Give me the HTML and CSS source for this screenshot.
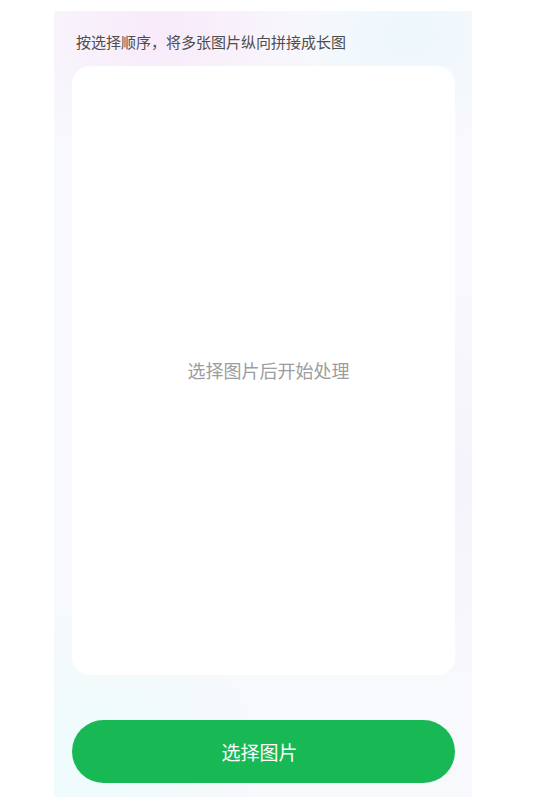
FILE: index.html
```html
<!DOCTYPE html>
<html lang="zh-CN">
<head>
<meta charset="utf-8">
<title>长图拼接</title>
<link rel="stylesheet" href="styles.css">
</head>
<body>
<main class="panel">
  <p class="hint">按选择顺序，将多张图片纵向拼接成长图</p>
  <section class="card">
    <span class="placeholder">选择图片后开始处理</span>
  </section>
  <button class="btn" type="button">选择图片</button>
</main>
</body>
</html>
```
FILE: styles.css
```css
html, body {
  margin: 0;
  padding: 0;
  background: #ffffff;
}
body {
  font-family: "Noto Sans CJK SC", "Noto Sans", sans-serif;
  padding: 11px 0 0 54px;
  box-sizing: border-box;
  height: 800px;
  overflow: hidden;
}
.panel {
  width: 418px;
  height: 786px;
  box-sizing: border-box;
  padding: 20px 17px 14px 18px;
  display: flex;
  flex-direction: column;
  background:
    radial-gradient(ellipse 55% 25% at 25% 2%, rgba(248, 232, 249, 0.9), rgba(248, 232, 249, 0) 70%),
    radial-gradient(ellipse 45% 20% at 85% 3%, rgba(236, 247, 252, 0.9), rgba(236, 247, 252, 0) 70%),
    radial-gradient(ellipse 60% 30% at 10% 95%, rgba(236, 252, 252, 0.9), rgba(236, 252, 252, 0) 70%),
    radial-gradient(ellipse 45% 35% at 95% 60%, rgba(244, 243, 252, 0.9), rgba(244, 243, 252, 0) 70%),
    #f8f9fd;
}
.hint {
  margin: 0;
  font-size: 15px;
  line-height: 22px;
  color: #4d4d4d;
  padding-left: 4px;
}
.card {
  margin-top: 13px;
  height: 609px;
  background: #ffffff;
  border-radius: 18px;
  display: flex;
  align-items: center;
  justify-content: center;
}
.placeholder {
  font-size: 18px;
  color: #9d9d9d;
  margin: 0 0 2px 10px;
}
.btn {
  margin-top: 45px;
  height: 63px;
  border: none;
  border-radius: 32px;
  background: #18b955;
  color: #ffffff;
  font-family: inherit;
  font-size: 19px;
  padding: 0 8px 0 0;
}
```
